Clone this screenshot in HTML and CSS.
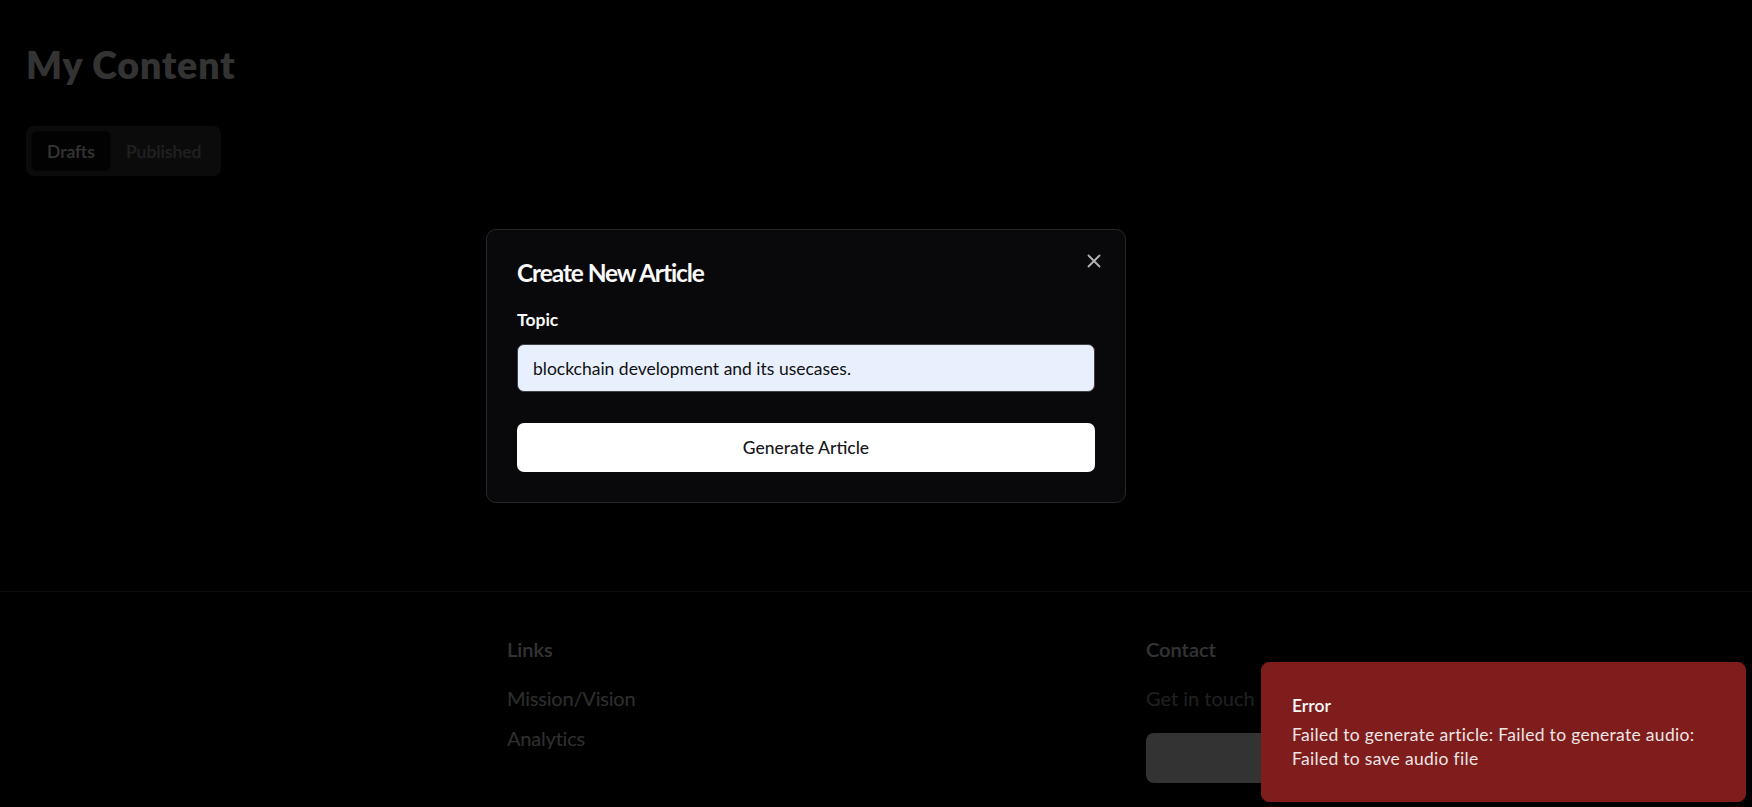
FILE: index.html
```html
<!DOCTYPE html>
<html lang="en">
<head>
<meta charset="utf-8">
<title>My Content</title>
<link rel="stylesheet" href="styles.css">
</head>
<body>
<div class="page">
  <main class="main">
    <h1 class="page-title">My Content</h1>
    <div class="tabs">
      <button class="tab tab-active">Drafts</button>
      <button class="tab">Published</button>
    </div>
  </main>
  <footer class="footer">
    <div class="footer-inner">
      <div class="footer-col">
        <h3 class="footer-heading">Links</h3>
        <a class="footer-link">Mission/Vision</a>
        <a class="footer-link">Analytics</a>
      </div>
      <div class="footer-col">
        <h3 class="footer-heading">Contact</h3>
        <p class="footer-muted">Get in touch</p>
        <button class="footer-btn" aria-label="Contact us"></button>
      </div>
    </div>
  </footer>
</div>

<div class="overlay"></div>

<div class="dialog" role="dialog">
  <button class="dialog-close" aria-label="Close">
    <svg viewBox="0 0 24 24" width="22" height="22" fill="none" stroke="currentColor" stroke-width="2" stroke-linecap="round" stroke-linejoin="round"><path d="M18 6 6 18"/><path d="m6 6 12 12"/></svg>
  </button>
  <h2 class="dialog-title">Create New Article</h2>
  <label class="field-label" for="topic">Topic</label>
  <input id="topic" class="field-input" type="text" value="blockchain development and its usecases.">
  <button class="primary-btn">Generate Article</button>
</div>

<div class="toast">
  <div class="toast-title">Error</div>
  <div class="toast-desc">Failed to generate article: Failed to generate audio: Failed to save audio file</div>
</div>
</body>
</html>
```
FILE: styles.css
```css
* { box-sizing: border-box; }

html, body {
  margin: 0;
  padding: 0;
  background: #000;
  font-family: "Lato", "Noto Sans", sans-serif;
  color: #fafafa;
  overflow: hidden;
}

.page {
  min-height: 807px;
}

.main {
  height: 591px;
  padding: 42px 26px 0 26px;
}

.page-title {
  margin: 0;
  font-size: 37.5px;
  line-height: 45px;
  font-weight: 800;
  letter-spacing: 0.9px;
  color: #ffffff;
}

.tabs {
  margin-top: 39px;
  display: inline-flex;
  padding: 5px;
  height: 50px;
  background: #3a3a3f;
  border-radius: 8px;
}

.tab {
  font-family: inherit;
  font-size: 17.5px;
  font-weight: 600;
  height: 40px;
  padding: 0 15px;
  border: none;
  border-radius: 5px;
  background: transparent;
  color: #a1a1aa;
}

.tab-active {
  background: #0a0a0a;
  color: #ffffff;
  border: 1px solid #222;
}

.footer {
  border-top: 1px solid #3a3a3f;
  padding-top: 43px;
}

.footer-inner {
  display: grid;
  grid-template-columns: 639px 560px;
  padding-left: 507px;
}

.footer-col {
  display: flex;
  flex-direction: column;
  align-items: flex-start;
}

.footer-heading {
  margin: 0 0 21px 0;
  font-size: 20px;
  line-height: 28px;
  font-weight: 600;
  color: #ffffff;
}

.footer-link {
  font-size: 20px;
  line-height: 28px;
  color: #e4e4e7;
  margin-bottom: 12px;
  letter-spacing: -0.2px;
}

.footer-muted {
  margin: 0 0 21px 0;
  font-size: 20px;
  line-height: 28px;
  color: #a1a1aa;
}

.footer-btn {
  width: 560px;
  height: 50px;
  border: none;
  border-radius: 8px;
  background: #ffffff;
}

.overlay {
  position: fixed;
  inset: 0;
  background: rgba(0, 0, 0, 0.8);
}

.dialog {
  position: fixed;
  left: 486px;
  top: 229px;
  width: 640px;
  padding: 30px;
  background: #09090b;
  border: 1px solid #27272a;
  border-radius: 10px;
  display: flex;
  flex-direction: column;
}

.dialog-close {
  position: absolute;
  top: 20px;
  right: 20px;
  width: 22px;
  height: 22px;
  padding: 0;
  border: none;
  background: transparent;
  color: #b4b4b8;
  display: flex;
}

.dialog-title {
  margin: 0;
  font-size: 24.5px;
  line-height: 25px;
  font-weight: 700;
  color: #fafafa;
  letter-spacing: -1.1px;
}

.field-label {
  margin-top: 26px;
  font-size: 17.5px;
  line-height: 17.5px;
  font-weight: 700;
  color: #fafafa;
}

.field-input {
  margin-top: 15.5px;
  height: 48px;
  width: 100%;
  padding: 0 15px;
  border: 1px solid #3f3f46;
  border-radius: 7px;
  background: #e8f0fe;
  color: #111;
  font-family: inherit;
  font-size: 17.5px;
  outline: none;
}

.primary-btn {
  margin-top: 31px;
  height: 49px;
  width: 100%;
  border: none;
  border-radius: 7px;
  background: #ffffff;
  color: #18181b;
  font-family: inherit;
  font-size: 17.5px;
  font-weight: 500;
}

.toast {
  position: fixed;
  right: 6px;
  bottom: 5px;
  width: 485px;
  padding: 30px;
  background: #7f1d1d;
  border: 1px solid #7f1d1d;
  border-radius: 8px;
  color: #fafafa;
}

.toast-title {
  font-size: 17.5px;
  line-height: 25px;
  font-weight: 600;
}

.toast-desc {
  margin-top: 5px;
  font-size: 17.5px;
  line-height: 24px;
  letter-spacing: 0.3px;
  opacity: 0.9;
}
```
